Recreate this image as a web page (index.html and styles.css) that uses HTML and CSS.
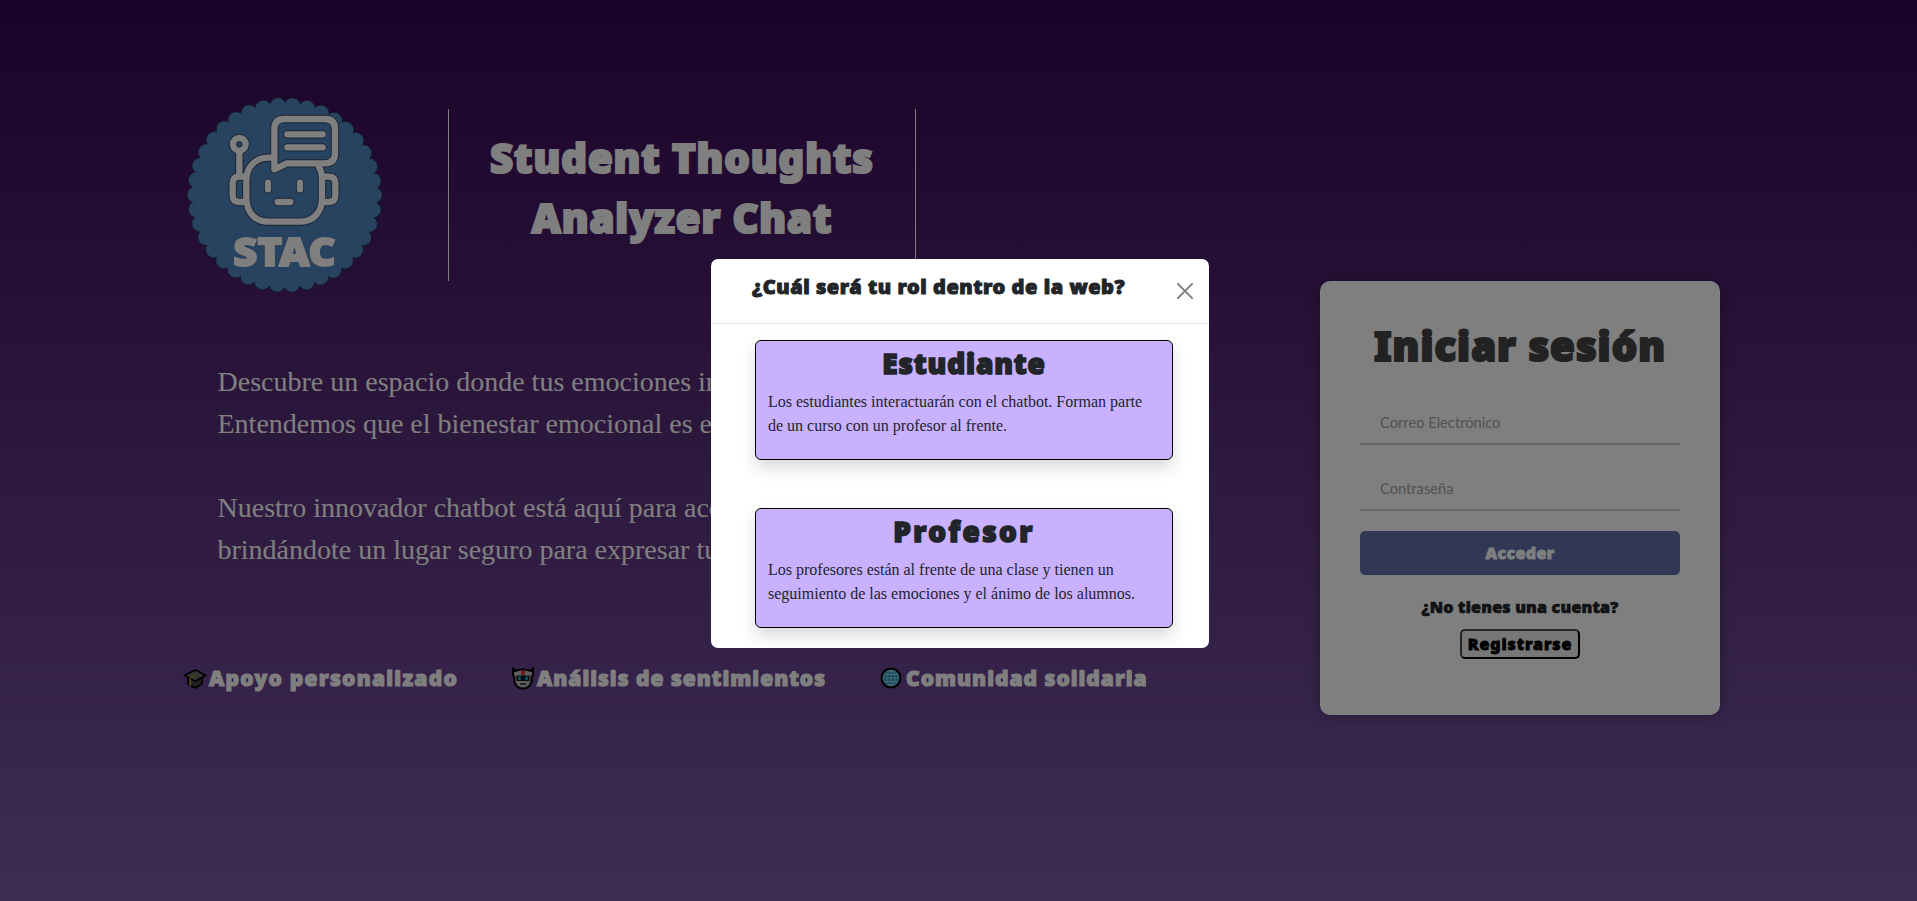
FILE: index.html
```
<!DOCTYPE html>
<html lang="es">
<head>
<meta charset="utf-8">
<title>STAC - Student Thoughts Analyzer Chat</title>
<link rel="stylesheet" href="styles.css">
</head>
<body>
<main class="page">
  <section class="intro">
    <header class="brand">
      <svg class="logo" viewBox="45 45 600 600">
        <defs>
          <g id="robot" fill="none" stroke-linecap="round" stroke-linejoin="round">
            <path d="M304 233H296C255 233 229 262 229 300V352C229 400 258 425 294 425H392C430 425 456 397 456 354V300C456 282 453 270 447 262"/>
            <path d="M313 268V147Q313 117 343 117H465Q495 117 495 147V220Q495 250 465 250H350Z"/>
            <path d="M352 163H458M352 202H458"/>
            <circle cx="208" cy="193" r="19"/>
            <path d="M208 221V284"/>
            <path d="M229 290H208Q188 290 188 310V346Q188 366 208 366H226"/>
            <path d="M458 290H476Q496 290 496 310V346Q496 366 476 366H460"/>
            <path d="M294 308V328M390 308V328M323 366H361"/>
          </g>
        </defs>
        <circle class="scallop-edge" cx="344" cy="345" r="268" pathLength="380"/>
        <circle class="scallop" cx="344" cy="345" r="268" pathLength="380"/>
        <circle class="disc" cx="344" cy="345" r="268"/>
        <use href="#robot" stroke="#3a4a66" stroke-width="25"/>
        <use href="#robot" stroke="#fff" stroke-width="19"/>
        <text class="logo-text" x="190" y="557" textLength="307" lengthAdjust="spacingAndGlyphs">STAC</text>
      </svg>
      <h1 class="brand-name">Student Thoughts<br>Analyzer Chat</h1>
    </header>
    <div class="description">
      <p>Descubre un espacio donde tus emociones importan.<br>Entendemos que el bienestar emocional es esencial.</p>
      <p>Nuestro innovador chatbot está aquí para acompañarte,<br>brindándote un lugar seguro para expresar tu sentir.</p>
    </div>
    <ul class="features">
      <li>
        <svg class="feature-icon" viewBox="0 0 24 24">
          <path d="M5 10v8l7 4 7-4v-8z" fill="#444" stroke="#000" stroke-width="1.6" stroke-linejoin="round"/>
          <path d="M1.300 9.300L12.500 4l10.300 5.200-10.500 6z" fill="#666" stroke="#000" stroke-width="1.6" stroke-linejoin="round"/>
          <path d="M12 9.500L7.300 12v6" fill="none" stroke="#c88a1c" stroke-width="1.200"/>
          <path d="M7.300 14.500L6 19.500h2.600z" fill="#c88a1c"/>
        </svg>
        <span class="feature-first">Apoyo personalizado</span>
      </li>
      <li>
        <svg class="feature-icon" viewBox="0 0 24 24">
          <path d="M2 2l2 3q8-3 16 0l2-3v7l-1.500 2v5q-2 6.500-8.500 6.500T3.500 16v-5L2 9z" fill="#bbb" stroke="#000" stroke-width="2" stroke-linejoin="round"/>
          <path d="M10.300 4h3.400v5h-3.400z" fill="#e3261b"/>
          <path d="M5.500 9.500h13v5.500h-13z" fill="#111"/>
          <path d="M7.300 10.500h2.400v3.500H7.300zM14.300 10.500h2.400v3.500h-2.400z" fill="#17b5e8"/>
          <path d="M9 18h6" stroke="#111" stroke-width="1.300"/>
        </svg>
        <span>Análisis de sentimientos</span>
      </li>
      <li>
        <svg class="feature-icon" viewBox="0 0 24 24">
          <circle cx="11" cy="12" r="9.500" fill="#0d93c4" stroke="#000" stroke-width="2"/>
          <g fill="none" stroke="#b4d3de" stroke-width=".9">
            <circle cx="11" cy="12" r="7.500"/>
            <ellipse cx="11" cy="12" rx="4" ry="7.500"/>
            <path d="M11 4.500v15M3.500 12h15M4.500 8.500h13M4.500 15.500h13"/>
          </g>
        </svg>
        <span>Comunidad solidaria</span>
      </li>
    </ul>
  </section>

  <form class="login">
    <h2 class="login-title">Iniciar sesión</h2>
    <input class="field" type="email" placeholder="Correo Electrónico">
    <input class="field" type="password" placeholder="Contraseña">
    <button class="submit" type="button">Acceder</button>
    <p class="no-account">¿No tienes una cuenta?</p>
    <button class="register" type="button">Registrarse</button>
  </form>
</main>

<div class="backdrop">
  <div class="modal" role="dialog">
    <div class="modal-header">
      <h3 class="modal-title">¿Cuál será tu rol dentro de la web?</h3>
      <svg class="close" viewBox="0 0 16 16"><path d="M.9.9l14.200 14.200M15.100.9L.9 15.100" stroke="#000" stroke-width="1.900" stroke-linecap="round"/></svg>
    </div>
    <div class="modal-body">
      <article class="role">
        <h4 class="role-name">Estudiante</h4>
        <p>Los estudiantes interactuarán con el chatbot. Forman parte de un curso con un profesor al frente.</p>
      </article>
      <article class="role">
        <h4 class="role-name role-name-wide">Profesor</h4>
        <p>Los profesores están al frente de una clase y tienen un seguimiento de las emociones y el ánimo de los alumnos.</p>
      </article>
    </div>
  </div>
</div>
</body>
</html>
```
FILE: styles.css
```
* { box-sizing: border-box; }

body {
  margin: 0;
  height: 901px;
  overflow: hidden;
  background: linear-gradient(#360552, #7e5aa6);
  font-family: "Liberation Serif", serif;
  color: #212529;
}

h1, h2, h3, h4, p, ul { margin: 0; padding: 0; }

h1, h2, h3, h4, .submit, .no-account, .register, .features {
  font-family: "Noto Sans", sans-serif;
  font-weight: 900;
}

.page {
  display: flex;
  align-items: flex-start;
  height: 901px;
  padding: 95px 197px 0 183px;
}

.intro { flex: 1; color: #fff; }

.brand { display: flex; align-items: flex-start; }

.logo { width: 200px; height: 200px; margin: 0 63px 0 2px; }

.scallop, .scallop-edge {
  fill: none;
  stroke: #5086c0;
  stroke-width: 47;
  stroke-linecap: round;
  stroke-dasharray: 0 10;
}
.scallop-edge { stroke: #2c3050; stroke-width: 53; }
.disc { fill: #5086c0; }

.logo-text {
  font: 900 118px "Noto Sans", sans-serif;
  fill: #fff;
  stroke: #fff;
  stroke-width: 6;
  stroke-linejoin: round;
  filter: drop-shadow(0 0 2px #1b2236);
}

.brand-name {
  width: 468px;
  height: 172px;
  margin-top: 14px;
  padding-top: 19px;
  border: solid #fff;
  border-width: 0 1px;
  font-size: 40px;
  line-height: 60px;
  letter-spacing: 0.95px;
  text-align: center;
  -webkit-text-stroke: 2.2px #fff;
}

.description {
  display: grid;
  gap: 42px;
  margin: 66px 0 0 34.5px;
  font-size: 28px;
  line-height: 42px;
  white-space: nowrap;
}

.features {
  display: grid;
  grid-template-columns: 328px 369px auto;
  margin-top: 92px;
  list-style: none;
  font-size: 21px;
  line-height: 30px;
  letter-spacing: 1px;
  white-space: nowrap;
  -webkit-text-stroke: 1.1px #fff;
}
.features li { display: flex; align-items: center; gap: 2px; }
.feature-first { letter-spacing: 1.25px; }
.feature-icon { width: 24px; height: 24px; }

.login {
  display: flex;
  flex-direction: column;
  align-items: center;
  width: 400px;
  height: 434px;
  margin-top: 186px;
  padding: 41px 40px 0;
  border-radius: 10px;
  background: #fff;
  box-shadow: 0 0 15px rgba(0, 0, 0, .3);
}

.login-title {
  margin-bottom: 31px;
  font-size: 40px;
  line-height: 48px;
  letter-spacing: 1.05px;
  color: #444;
  -webkit-text-stroke: 2.2px #444;
}

.field {
  width: 100%;
  height: 44px;
  margin-bottom: 22px;
  padding: 9px 20px 9px;
  border: 0;
  border-bottom: 2px solid #d0d0d0;
  background: transparent;
  font: 14.7px/24px Lato, sans-serif;
}
.field::placeholder { color: #a4a4a4; }

.submit {
  width: 100%;
  height: 44px;
  margin-top: -2px;
  border: 0;
  border-radius: 5px;
  background: #626fab;
  color: #fff;
  font-size: 16px;
  letter-spacing: 0.4px;
  -webkit-text-stroke: 0.8px #fff;
}

.no-account {
  margin: 20px 0 10px;
  font-size: 16px;
  line-height: 24px;
  letter-spacing: 0.22px;
  -webkit-text-stroke: 0.7px #212529;
}

.register {
  width: 120px;
  height: 30px;
  padding: 0;
  border: 2px solid;
  border-color: #4c4c4c #000 #000 #4c4c4c;
  border-radius: 5px;
  background: #efefef;
  color: #000;
  font-size: 16px;
  letter-spacing: 0.9px;
  -webkit-text-stroke: 0.8px #000;
}

.backdrop {
  position: fixed;
  inset: 0;
  display: flex;
  justify-content: center;
  align-items: flex-start;
  padding: 259px 0 0 3px;
  background: rgba(0, 0, 0, .5);
}

.modal {
  width: 498px;
  height: 389px;
  border-radius: 7px;
  background: #fff;
}

.modal-header {
  display: flex;
  justify-content: space-between;
  height: 65px;
  padding: 13px 16px 0 41px;
  border-bottom: 1px solid #dee2e6;
}

.modal-title {
  font-size: 20px;
  line-height: 30px;
  letter-spacing: 0.55px;
  -webkit-text-stroke: 1px #212529;
}

.close { width: 16px; height: 16px; margin-top: 11px; opacity: .5; }

.modal-body {
  display: grid;
  gap: 48px;
  padding: 16px 36px 20px 44px;
}

.role {
  height: 120px;
  padding: 5px 12px;
  border: 1px solid #000;
  border-radius: 6px;
  background: #c9b1ff;
  box-shadow: 0 8px 16px rgba(0, 0, 0, .15);
  font-size: 16px;
  line-height: 24px;
}

.role-name {
  margin-bottom: 9.500px;
  font-size: 28px;
  line-height: 34px;
  letter-spacing: 0.85px;
  text-align: center;
  -webkit-text-stroke: 1.6px #212529;
}
.role-name-wide { letter-spacing: 2.4px; }
```
